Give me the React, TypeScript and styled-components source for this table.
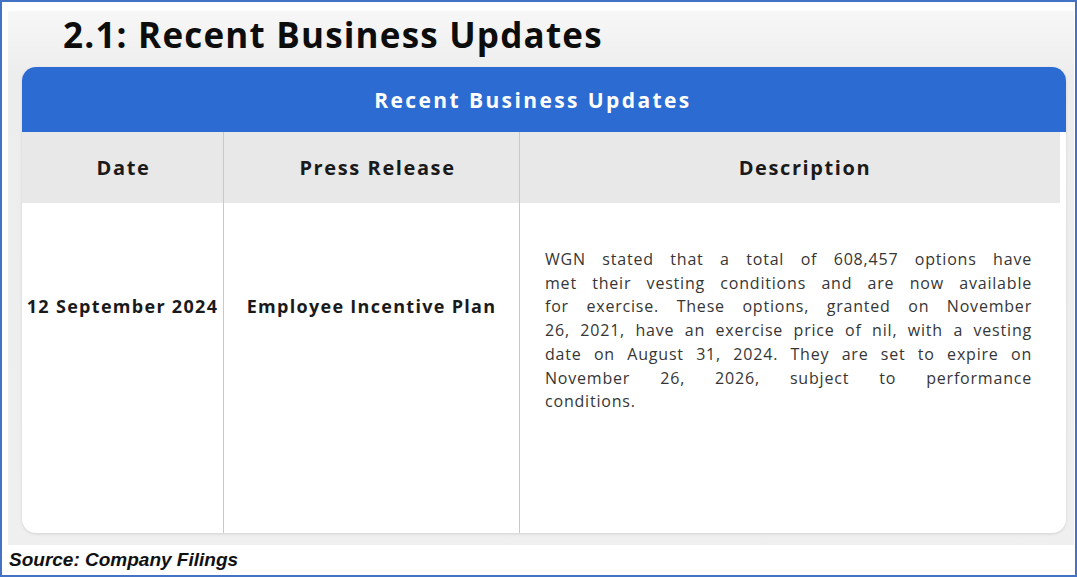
import React from "react";
import styled, { createGlobalStyle } from "styled-components";

const GlobalStyle = createGlobalStyle`
  html, body {
    margin: 0;
    padding: 0;
    background: #ffffff;
  }
`;

const descriptionLines = [
  "WGN stated that a total of 608,457 options have",
  "met their vesting conditions and are now available",
  "for exercise. These options, granted on November",
  "26, 2021, have an exercise price of nil, with a vesting",
  "date on August 31, 2024. They are set to expire on",
  "November 26, 2026, subject to performance",
  "conditions.",
];

const columns = [
  { title: "Date", shift: 2 },
  { title: "Press Release", shift: 12 },
  { title: "Description", shift: 30 },
];

function App() {
  return (
    <>
      <GlobalStyle />
      <Frame>
        <Panel>
          <Title>2.1: Recent Business Updates</Title>
          <Card>
            <CardHeader>Recent Business Updates</CardHeader>
            <Table>
              {columns.map((col, i) => (
                <HeadCell
                  key={col.title}
                  $shift={col.shift}
                  $last={i === columns.length - 1}
                >
                  {col.title}
                </HeadCell>
              ))}
              <BodyCell>
                <Strong>12 September 2024</Strong>
              </BodyCell>
              <BodyCell>
                <Strong>Employee Incentive Plan</Strong>
              </BodyCell>
              <DescCell>
                {descriptionLines.map((line, i) => (
                  <Line key={i} $last={i === descriptionLines.length - 1}>
                    {line}
                  </Line>
                ))}
              </DescCell>
            </Table>
          </Card>
        </Panel>
        <Source>Source: Company Filings</Source>
      </Frame>
    </>
  );
}

const Frame = styled.div`
  width: 1077px;
  height: 577px;
  box-sizing: border-box;
  border: 2px solid #4472c4;
  background: #ffffff;
  display: flex;
  flex-direction: column;
  padding: 9px 1px 0 6px;
`;

const Panel = styled.div`
  height: 534px;
  background: linear-gradient(180deg, #f7f7f7 0%, #ededed 12%, #efefef 100%);
  display: flex;
  flex-direction: column;
  padding: 0 8px 12px 14px;
  box-sizing: border-box;
`;

const Title = styled.h1`
  margin: 0;
  height: 56px;
  box-sizing: border-box;
  padding: 0 0 9px 41px;
  display: flex;
  align-items: center;
  font-family: "Open Sans", "Liberation Sans", sans-serif;
  font-weight: 700;
  font-size: 35px;
  color: #0d0d0d;
  letter-spacing: 1.2px;
`;

const Card = styled.div`
  flex: 1;
  background: #ffffff;
  border-radius: 14px;
  overflow: hidden;
  display: flex;
  flex-direction: column;
  box-shadow: 0 1px 3px rgba(0, 0, 0, 0.12);
`;

const CardHeader = styled.div`
  height: 65px;
  background: #2b6bd2;
  color: #ffffff;
  display: flex;
  align-items: center;
  justify-content: center;
  font-family: "Open Sans", "Liberation Sans", sans-serif;
  font-weight: 700;
  font-size: 21px;
  letter-spacing: 2.4px;
  padding-right: 22px;
`;

const Table = styled.div`
  flex: 1;
  display: grid;
  grid-template-columns: 202px 296px 1fr;
  grid-template-rows: 71px 1fr;
  margin-right: 6px;
`;

const HeadCell = styled.div<{ $last?: boolean; $shift: number }>`
  background: #e8e8e8;
  display: flex;
  align-items: center;
  justify-content: center;
  padding-left: ${(p) => p.$shift}px;
  font-family: "Open Sans", "Liberation Sans", sans-serif;
  font-weight: 700;
  font-size: 20px;
  letter-spacing: 1.6px;
  color: #1a1a1a;
  border-right: ${(p) => (p.$last ? "none" : "1px solid #c9c9c9")};
`;

const BodyCell = styled.div`
  display: flex;
  justify-content: center;
  padding-top: 91px;
  border-right: 1px solid #c9c9c9;
`;

const Strong = styled.span`
  font-family: "Open Sans", "Liberation Sans", sans-serif;
  font-weight: 700;
  font-size: 18px;
  letter-spacing: 1.3px;
  line-height: 24px;
  color: #1a1a1a;
`;

const DescCell = styled.div`
  padding: 45px 28px 0 25px;
  font-family: "Open Sans", "Liberation Sans", sans-serif;
  font-size: 16px;
  line-height: 23.7px;
  color: #363636;
`;

const Line = styled.div<{ $last?: boolean }>`
  text-align: ${(p) => (p.$last ? "left" : "justify")};
  text-align-last: ${(p) => (p.$last ? "left" : "justify")};
  white-space: nowrap;
  letter-spacing: 0.8px;
`;

const Source = styled.div`
  flex: 1;
  display: flex;
  align-items: center;
  padding-left: 1px;
  font-family: "Liberation Sans", Arial, sans-serif;
  font-weight: 700;
  font-style: italic;
  font-size: 19px;
  color: #111111;
`;

export default App;
